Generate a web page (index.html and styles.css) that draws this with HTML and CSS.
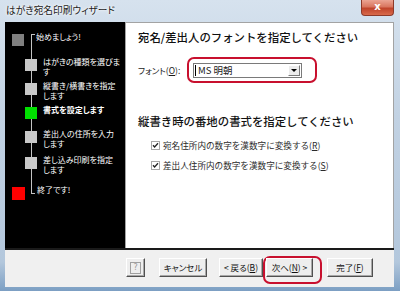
FILE: index.html
```html
<!DOCTYPE html>
<html>
	<head>
		<meta charset="utf-8">
		<title>はがき宛名印刷ウィザード</title>
		<link rel="stylesheet" href="styles.css">
	</head>
	<body>
		<div class="Wiz_Window">
			<div class="Wiz_Title">
				<span class="Wiz_TitleText">はがき宛名印刷ウィザード</span>
				<span class="Wiz_Close">x</span>
			</div>
			<div class="Wiz_Client">
				<div class="Wiz_Main">
					<!-- 左側のステップ一覧 -->
					<div class="Wiz_Steps">
						<div class="Wiz_Line"></div>
						<div class="Wiz_Step Wiz_Step_end"><i class="sq sq_dark"></i><span>始めましょう!</span></div>
						<div class="Wiz_Step"><i class="sq"></i><span>はがきの種類を選びま<br>す</span></div>
						<div class="Wiz_Step"><i class="sq"></i><span>縦書き/横書きを指定<br>します</span></div>
						<div class="Wiz_Step Wiz_Step_now"><i class="sq sq_green"></i><span>書式を設定します</span></div>
						<div class="Wiz_Step"><i class="sq"></i><span>差出人の住所を入力<br>します</span></div>
						<div class="Wiz_Step"><i class="sq"></i><span>差し込み印刷を指定<br>します</span></div>
						<div class="Wiz_Step Wiz_Step_end"><i class="sq sq_red"></i><span>終了です!</span></div>
					</div>
					<!-- 右側の設定 -->
					<div class="Wiz_Content">
						<div class="Wiz_H">宛名/差出人のフォントを指定してください</div>
						<div class="Wiz_FontRow">
							<span class="Wiz_Label">フォント(<u>O</u>):</span>
							<span class="Wiz_Mark">
								<span class="Wiz_Select">
									<span class="Wiz_SelText">MS 明朝</span>
									<span class="Wiz_Drop"><i></i></span>
								</span>
							</span>
						</div>
						<div class="Wiz_H Wiz_H2">縦書き時の番地の書式を指定してください</div>
						<label class="Wiz_Check">
							<svg width="9" height="9" viewBox="0 0 9 9"><rect x="0.5" y="0.5" width="8" height="8" fill="#fff" stroke="#a8a8a8"/><path d="M2 4.2 L3.6 6 L7 2.3" fill="none" stroke="#222" stroke-width="1.3"/></svg>
							<span>宛名住所内の数字を漢数字に変換する(<u>R</u>)</span>
						</label>
						<label class="Wiz_Check">
							<svg width="9" height="9" viewBox="0 0 9 9"><rect x="0.5" y="0.5" width="8" height="8" fill="#fff" stroke="#a8a8a8"/><path d="M2 4.2 L3.6 6 L7 2.3" fill="none" stroke="#222" stroke-width="1.3"/></svg>
							<span>差出人住所内の数字を漢数字に変換する(<u>S</u>)</span>
						</label>
					</div>
				</div>
				<div class="Wiz_Foot">
					<span class="Btn Btn_help"><i>?</i></span>
					<span class="Btn Btn_cancel">キャンセル</span>
					<span class="Btn Btn_back">&lt; 戻る(<u>B</u>)</span>
					<span class="Wiz_Mark Wiz_Mark_btn"><span class="Btn Btn_next">次へ(<u>N</u>) &gt;</span></span>
					<span class="Btn Btn_done">完了(<u>F</u>)</span>
				</div>
			</div>
		</div>
	</body>
</html>
```

FILE: styles.css
```css
body {
	margin: 0;
	width: 400px;
	height: 291px;
	overflow: hidden;
	font-family: "Noto Sans CJK JP", "Noto Sans", sans-serif;
	background: #c3d3e4;
}

.Wiz_Window {
	width: 400px;
	height: 291px;
	box-sizing: border-box;
	padding: 0 6px 4px 5px;
	display: flex;
	flex-direction: column;
	background: linear-gradient(to bottom, #d6e2ee 0%, #c2d2e3 40%, #b3c7dc 90%, #7c9fc3 100%);
}

/* タイトルバー */
.Wiz_Title {
	height: 22px;
	display: flex;
	align-items: flex-start;
}
.Wiz_TitleText {
	margin: 5px 0 0 1px;
	font-size: 9.7px;
	line-height: 11px;
	color: #1c1c1c;
	text-shadow: 0 0 4px #fff, 0 0 2px #fff;
	font-feature-settings: "palt";
}
.Wiz_Close {
	margin-left: auto;
	width: 33px;
	height: 16px;
	box-sizing: border-box;
	border: 1px solid #8d3a2a;
	border-top: 0;
	border-radius: 0 0 4px 4px;
	background: linear-gradient(to bottom, #eba493 0%, #d9765f 45%, #c0442b 55%, #d86a4b 100%);
	color: #fff;
	font: bold 10px/14px "DejaVu Sans", sans-serif;
	text-align: center;
}

.Wiz_Client {
	flex: 1;
	display: flex;
	flex-direction: column;
	background: #f0f0f0;
}

.Wiz_Main {
	height: 226px;
	display: flex;
	border-bottom: 2px solid #1a1a1a;
}

/* ステップ */
.Wiz_Steps {
	position: relative;
	width: 120px;
	box-sizing: border-box;
	padding-top: 12px;
	background: #000;
	display: grid;
	grid-template-rows: 25px 24px 24px 24px 26px 30px auto;
	align-content: start;
	color: #fff;
	font-size: 8px;
	line-height: 10px;
	font-feature-settings: "palt";
}
.Wiz_Line {
	position: absolute;
	left: 26px;
	top: 12px;
	width: 3px;
	height: 158px;
	border: 1px solid #c4c4c4;
	border-right: 0;
}
.Wiz_Step {
	display: flex;
	align-items: flex-start;
	position: relative;
}
.Wiz_Step .sq {
	width: 12px;
	height: 12px;
	margin-left: 20px;
	background: #c8c8c8;
	flex: none;
}
.Wiz_Step span {
	margin: -2px 0 0 6px;
	white-space: nowrap;
}
.Wiz_Step_end .sq {
	margin-left: 7px;
}
.Wiz_Step_end span {
	margin-left: 12px;
}
.Wiz_Step_now span {
	font-weight: bold;
}
.sq_dark { background: #808080 !important; }
.sq_green { background: #00e000 !important; }
.sq_red { background: #ff0000 !important; width: 13px !important; height: 13px !important; }

/* 右側 */
.Wiz_Content {
	flex: 1;
	background: #fff;
	border: 1px solid #a3a3a3;
	border-bottom: 0;
	padding: 7px 0 0 12px;
	color: #1a1a1a;
}
.Wiz_H {
	font-size: 11.4px;
	line-height: 14px;
	font-weight: 500;
	white-space: nowrap;
	color: #111;
}
.Wiz_H2 {
	margin-top: 31px;
}
.Wiz_FontRow {
	margin-top: 13px;
	display: flex;
	align-items: center;
}
.Wiz_Label {
	width: 49px;
	font-size: 8.5px;
	font-feature-settings: "palt";
	white-space: nowrap;
}
.Wiz_Mark {
	display: inline-flex;
	border: 2px solid #c8102e;
	border-radius: 7px;
	padding: 4px 13px 3px 4px;
}
.Wiz_Select {
	width: 109px;
	height: 15px;
	box-sizing: border-box;
	border: 1px solid #7a7a7a;
	background: #fff;
	display: flex;
	align-items: center;
}
.Wiz_SelText {
	flex: 1;
	padding-left: 2px;
	font-size: 9.5px;
	line-height: 11px;
	border-left: 1px solid #000;
	margin-left: 1px;
}
.Wiz_Drop {
	width: 12px;
	height: 11px;
	margin-right: 1px;
	box-sizing: border-box;
	border: 1px solid;
	border-color: #fff #7a7a7a #7a7a7a #fff;
	background: #ececec;
	display: flex;
	align-items: center;
	justify-content: center;
}
.Wiz_Drop i {
	width: 0;
	height: 0;
	border-left: 3px solid transparent;
	border-right: 3px solid transparent;
	border-top: 3px solid #000;
}
.Wiz_Check {
	display: flex;
	align-items: center;
	margin: 11px 0 0 13px;
	height: 12px;
	font-size: 8.6px;
	white-space: nowrap;
	color: #2a2a2a;
}
.Wiz_Check + .Wiz_Check {
	margin-top: 8px;
}
.Wiz_Check span {
	margin-left: 3px;
}

/* ボタン */
.Wiz_Foot {
	flex: 1;
	display: flex;
	align-items: flex-start;
	padding: 8px 0 0 121px;
}
.Btn {
	height: 19px;
	box-sizing: border-box;
	border: 1px solid;
	border-color: #fff #505050 #505050 #fff;
	box-shadow: inset -1px -1px 0 #a8a8a8;
	background: #eeeeee;
	font-size: 8.5px;
	line-height: 17px;
	text-align: center;
	color: #111;
	white-space: nowrap;
	font-feature-settings: "palt";
}
.Btn_help {
	width: 19px;
	display: flex;
	align-items: center;
	justify-content: center;
}
.Btn_help i {
	width: 9px;
	height: 10px;
	border: 1px solid #a0a0a0;
	font: normal 8px/10px "DejaVu Sans", sans-serif;
	color: #9a9a9a;
}
.Btn_cancel {
	width: 48px;
	margin-left: 14px;
}
.Btn_back {
	width: 44px;
	margin-left: 12px;
}
.Wiz_Mark_btn {
	margin-top: -2px;
	padding: 0 7px 5px 1px;
}
.Btn_next {
	width: 47px;
}
.Btn_done {
	width: 46px;
	margin-left: 5px;
}
```
